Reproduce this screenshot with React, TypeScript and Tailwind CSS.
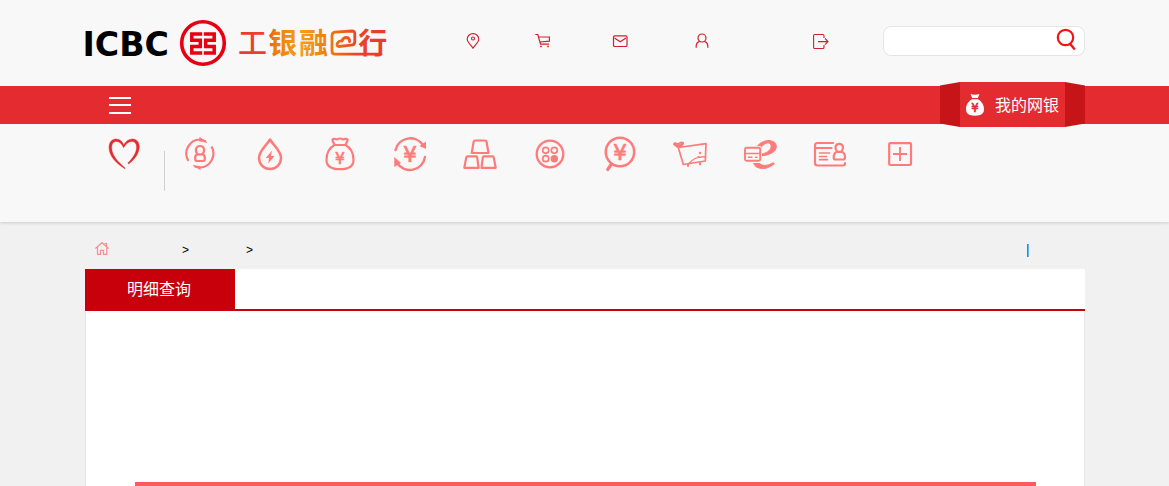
import React from "react";

const cjk = "font-['Open_Sans','Noto_Sans_CJK_SC',sans-serif]";

function Icon({ children }: { children: React.ReactNode }) {
  return (
    <svg
      className="h-9 w-9 shrink-0 overflow-visible text-[#ff7b7b]"
      viewBox="0 0 36 36"
      fill="none"
      stroke="currentColor"
      strokeWidth="2.2"
      strokeLinecap="round"
      strokeLinejoin="round"
    >
      {children}
    </svg>
  );
}

function Yen({ x, y, size }: { x: number; y: number; size: number }) {
  return (
    <text
      x={x}
      y={y}
      fontSize={size}
      fontFamily="DejaVu Sans"
      fontWeight="400"
      textAnchor="middle"
      fill="currentColor"
      stroke="currentColor"
      strokeWidth="0.7"
    >
      ¥
    </text>
  );
}

function Logo() {
  return (
    <svg className="h-[86px] w-[305px] shrink-0 overflow-visible" viewBox="85 0 305 86">
      <defs>
        <linearGradient id="brand" gradientUnits="userSpaceOnUse" x1="239" y1="0" x2="386" y2="0">
          <stop offset="0" stopColor="#ea3a2b" />
          <stop offset="0.18" stopColor="#ea4428" />
          <stop offset="0.24" stopColor="#ee7a08" />
          <stop offset="0.42" stopColor="#f3a01c" />
          <stop offset="0.62" stopColor="#ee7a08" />
          <stop offset="0.8" stopColor="#ea4428" />
          <stop offset="1" stopColor="#ea3a2b" />
        </linearGradient>
      </defs>
      <text x="82.500" y="55.500" fontFamily="DejaVu Sans" fontWeight="700" fontSize="34.500" textLength="86.500" lengthAdjust="spacingAndGlyphs" fill="#000">
        ICBC
      </text>
      <circle cx="203" cy="43" r="21.300" fill="none" stroke="#e60012" strokeWidth="3.600" />
      <g fill="none" stroke="#e60012" strokeWidth="3.500">
        <path d="M202.200 34H191.800V40.200H200.300V46.600H191.800V53H202.200" />
        <path d="M203.800 34H214.200V40.200H205.700V46.600H214.200V53H203.800" />
      </g>
      <g fontFamily="Noto Sans CJK SC" fontWeight="700" fontSize="29" fill="url(#brand)">
        <text x="238" y="54" fontWeight="500">工</text>
        <text x="268.300" y="54">银</text>
        <text x="299" y="54">融</text>
        <text x="358.300" y="54">行</text>
      </g>
      <g fill="none" stroke="url(#brand)" strokeWidth="2.800" strokeLinejoin="round" strokeLinecap="round">
        <path d="M381 54.200H335Q332 54.200 332 51V36Q332 32.500 335 32.200L352 31Q355 31 354.800 34V42Q354.500 45 351 45.200L339 46.500Q336 46 337.500 43Q339 40.500 342 41Q343 37.500 346.500 37.500Q350 38 349.500 41.500" />
      </g>
    </svg>
  );
}

const smallIcon = "h-4 w-4 shrink-0 text-[#d21f2b]";

function Header() {
  return (
    <header className="flex h-[86px] pl-[85px]">
      <Logo />
      <div className="flex h-[86px] items-start pt-[33px] pl-[75px]">
        <svg className={smallIcon} viewBox="0 0 16 16" fill="none" stroke="currentColor" strokeWidth="1.100">
          <path d="M8 15.300C6 12.200 2.200 9 2.200 6.200a5.800 5.600 0 0 1 11.600 0C13.800 9 10 12.200 8 15.300Z" />
          <circle cx="8" cy="5.500" r="1.500" />
        </svg>
        <svg className={`${smallIcon} ml-[54px]`} viewBox="0 0 16 16" fill="none" stroke="currentColor" strokeWidth="1.200">
          <path d="M.3 1.500H2.800L5.500 11.200H14M3.600 4H14.400V8.200L4.800 9" />
          <circle cx="6" cy="13.400" r=".9" fill="currentColor" stroke="none" />
          <circle cx="13" cy="13.400" r=".9" fill="currentColor" stroke="none" />
        </svg>
        <svg className={`${smallIcon} ml-[61px]`} viewBox="0 0 16 16" fill="none" stroke="currentColor" strokeWidth="1.200">
          <rect x="1.500" y="2.800" width="13.500" height="10.700" rx="1.300" />
          <path d="M2.500 5L8.200 8.700L14 5" />
        </svg>
        <svg className={`${smallIcon} ml-[66px]`} viewBox="0 0 16 16" fill="none" stroke="currentColor" strokeWidth="1.200">
          <circle cx="8" cy="5" r="4" />
          <path d="M2.200 14.700V12.500Q2.500 9.300 5.500 8.500M10.500 8.500Q13.500 9.300 13.800 12.500V14.700" />
        </svg>
        <svg className={`${smallIcon} ml-[103px]`} viewBox="0 0 16 16" fill="none" stroke="currentColor" strokeWidth="1.100">
          <path d="M11 5V2.800Q11 1.500 9.700 1.500H1.800Q.6 1.500 .6 2.800V14.300Q.6 15.500 1.800 15.500H9.700Q11 15.500 11 14.300V12M5 8.600H15M12 5.500L15 8.600L12 11.700" />
        </svg>
      </div>
      <div className="mt-[26px] ml-[54px] flex h-[30px] w-[202px] justify-end rounded-lg border border-[#e5e5e5] bg-white pr-[6px]">
        <svg className="h-6 w-[22px]" viewBox="0 0 22 24" fill="none" stroke="#f51414" strokeWidth="2.200">
          <circle cx="9.500" cy="10.500" r="7.700" />
          <path d="M13.800 16.500L18.800 22.500" strokeWidth="2.400" />
        </svg>
      </div>
    </header>
  );
}

function NavBar() {
  return (
    <nav className="relative flex h-[38px] items-center bg-[#e42b30] pl-[109px]">
      <div className="flex flex-col gap-[5.500px]">
        <span className="h-0.5 w-[22px] bg-white" />
        <span className="h-0.5 w-[22px] bg-white" />
        <span className="h-0.5 w-[22px] bg-white" />
      </div>
      <div className="absolute -top-1 left-[940px] flex h-[45px] w-[145px]">
        <svg className="h-[45px] w-5" viewBox="0 0 20 45">
          <path d="M0 3.500L20 0V45L0 41.500Z" fill="#c71418" />
        </svg>
        <div className="flex w-[105px] items-center bg-[#e42b30] pl-[5px]">
          <svg className="h-[22px] w-5 text-[#e42b30]" viewBox="0 0 20 22">
            <path d="M5.500 0Q10 1.500 14.500 0L12.800 4H7.200ZM7 5.300H13C16 7 19 10.500 19 15C19 19.500 16.500 21.700 10 21.700S1 19.500 1 15C1 10.500 4 7 7 5.300Z" fill="white" />
            <Yen x={10} y={17.500} size={11.500} />
          </svg>
          <span className={`${cjk} ml-[10px] text-base leading-6 whitespace-nowrap text-white`}>我的网银</span>
        </div>
        <svg className="h-[45px] w-5" viewBox="0 0 20 45">
          <path d="M0 0L20 3.500V41.500L0 45Z" fill="#c71418" />
        </svg>
      </div>
    </nav>
  );
}

function Shortcuts() {
  return (
    <section className="flex h-[98px] items-start pt-3 pl-[106px]">
      <svg className="h-9 w-9 shrink-0" viewBox="0 0 36 36" fill="#e42b30">
        <path d="M18.800 32.800C10 27 3 20 3 11.500C3 5 7 3 10 3C14 3 17 6 17.600 9C20 5 23 2.800 27 3C31 3.200 33.300 6.500 33.300 11C33 18 28 24 22.500 28L21.800 27C26 23 30.600 17 30.600 11C30.600 7.500 28.800 5.500 26 5.500C22 5.500 19.300 9 17.600 11.800C16 8 13.500 5.500 10.500 5.500C7 5.500 5.700 8 5.700 12C5.700 19 12 26 19.200 32Z" stroke="#e42b30" strokeWidth=".4" />
      </svg>
      <span className="mt-[15px] ml-[22px] h-10 w-px bg-[#d0d0d0]" />
      <div className="ml-[17px] flex gap-[34px]">
        <Icon>
          <path d="M6.500 25A14 14 0 0 1 18 3.500L24 5.200M29.500 10.500A14 14 0 0 1 18 31.500L12.500 30.500" strokeLinecap="butt" />
          <path d="M18 1.500L25 6.500L17.500 5ZM18 33.500L11 29.500L18 30.500Z" strokeWidth=".6" fill="currentColor" />
          <path d="M15.300 18C13 15.500 13.200 10 18 10S23 15.500 20.700 18Q23.200 19.500 22.800 23Q22.800 25 21 25H15Q13.200 25 13.200 23Q12.800 19.500 15.300 18ZM15.300 18.300H20.700" />
        </Icon>
        <Icon>
          <path d="M18 3.500C14.500 9.500 7 14.500 7 22A11 11 0 0 0 29 22C29 14.500 21.500 9.500 18 3.500Z" strokeWidth="2.500" />
          <path d="M20 14.500L13.800 22H17L16.300 27.500L22.500 20H19Z" fill="currentColor" stroke="none" />
        </Icon>
        <Icon>
          <path d="M12.500 9L10.500 4.500Q10.200 2.500 12.500 2.800L15 3.500Q18 1.500 21 3.500L23.500 2.800Q26 2.500 25.500 4.500L23.500 9ZM12.500 9C7 12 4.500 17 4.500 24C4.500 30 8 33.200 18 33.200S31.500 30 31.500 24C31.500 17 29 12 23.500 9" />
          <Yen x={18} y={27.500} size={15.500} />
        </Icon>
        <Icon>
          <path d="M3.500 14A15.300 15.300 0 0 1 31 9M33 21A15.300 15.300 0 0 1 5 27" strokeWidth="2.400" />
          <path d="M34 5.500V13L27.500 10ZM2.300 21V31L9 27Z" fill="currentColor" stroke="none" />
          <g strokeWidth="1">
            <Yen x={18} y={26} size={22} />
          </g>
        </Icon>
        <Icon>
          <path d="M13 4.500H23.200Q24.300 4.500 24.500 5.500L26.500 17H9.700L11.700 5.500Q12 4.500 13 4.500ZM5.500 20.300H14Q15 20.300 15.200 21.300L16.600 31.800H2.300L4.300 21.300Q4.600 20.300 5.500 20.300ZM22 20.300H30.500Q31.500 20.300 31.700 21.300L33.700 31.800H19.500L20.800 21.300Q21 20.300 22 20.300Z" />
        </Icon>
        <Icon>
          <circle cx="18" cy="18" r="13.300" strokeWidth="2.300" />
          <circle cx="13.700" cy="14.300" r="3" strokeWidth="1.700" />
          <circle cx="22.300" cy="14.300" r="3" strokeWidth="1.700" />
          <circle cx="13.700" cy="22.700" r="3" strokeWidth="1.700" />
          <circle cx="22.300" cy="22.700" r="3.700" fill="currentColor" stroke="none" />
        </Icon>
        <Icon>
          <circle cx="18" cy="16" r="14.200" strokeWidth="2.500" />
          <path d="M9.500 28L5.700 33.500" strokeWidth="3.200" />
          <Yen x={18} y={24} size={22} />
        </Icon>
        <Icon>
          <g strokeWidth="1.700">
            <path d="M6.300 11.500L34 7.700L33.300 25L11.300 28.500ZM6.300 11.500L2 8.500Q2.500 6.500 6.300 8Q9 5.500 11.300 7Q10.500 9.500 6.300 11.500" />
            <path d="M2.500 7.500L6.300 10L10.500 7.500" strokeWidth="2.200" />
            <path d="M17 27.500Q23 20 33 21M26 20.500Q28.500 22.200 30.500 20.500" strokeWidth="1.300" />
            <path d="M16 28.500V30M28 27V28.500" strokeWidth="2" />
            <circle cx="28" cy="17" r="1.200" fill="currentColor" stroke="none" />
          </g>
        </Icon>
        <Icon>
          <text x="9" y="31.500" fontSize="60" fontFamily="Liberation Serif" fontStyle="italic" fontWeight="400" fill="currentColor" stroke="currentColor" strokeWidth=".9">e</text>
          <rect x="1" y="10" width="19" height="17" rx="3" fill="#f8f8f8" stroke="none" />
          <rect x="3" y="11.800" width="15.200" height="13" rx="1.500" strokeWidth="1.900" />
          <path d="M3 17.500H18" strokeWidth="1.500" />
          <path d="M6.500 21.300H10M13.500 21.300H15" strokeWidth="1.500" />
        </Icon>
        <Icon>
          <path d="M21 7H5.500Q3 7 3 9.500V27Q3 29.500 5.500 29.500H31Q33 29.500 33 27M4 12H19.500" />
          <path d="M7.500 17H17.500M7.500 20.500H14.500M7.500 23.700H15.500" strokeWidth="1.700" />
          <path d="M25 15.500C22.500 12.500 23 7.800 27.200 7.800S32 12.500 29.500 15.500Q33 17 33 21.500Q33 23.500 31 23.500H23.500Q21.700 23.500 21.700 21.500Q21.700 17 25 15.500ZM25 15.800H29.500" />
        </Icon>
        <Icon>
          <rect x="7.200" y="7.200" width="21.800" height="21.800" rx="1" />
          <path d="M18 11V25M11 18H25" strokeWidth="1.900" strokeLinecap="butt" />
        </Icon>
      </div>
    </section>
  );
}

export default function App() {
  return (
    <div className="h-[486px] w-[1169px] overflow-hidden bg-[#f1f1f1]">
      <div className="h-[222px] bg-[#f8f8f8] shadow-[0_1px_3px_rgba(0,0,0,0.16)]">
        <Header />
        <NavBar />
        <Shortcuts />
      </div>
      <main className="ml-[85px] w-[1000px]">
        <div className="flex h-[47px] items-start font-['Liberation_Sans'] text-[12px] leading-[14px] text-black">
          <svg className="mt-[19.500px] ml-[10px] h-[13px] w-[14px]" viewBox="0 0 14 13" fill="none" stroke="#f78f8f" strokeWidth="1.200">
            <path d="M.4 6.500L7 .7L13.600 6.500M2.500 5V12.400H5.500V8.300H8.500V12.400H11.800V5M9.500 1.500H11.500V4.200" />
          </svg>
          <span className="mt-[21px] ml-[73px] w-16">&gt;</span>
          <span className="mt-[21px] w-16">&gt;</span>
          <span className="mt-[22px] ml-[717px] h-[13px] w-0.5 border-l border-[#a86d20] bg-[#5bb5f5]" />
        </div>
        <div className="flex h-[42px] border-b-2 border-[#c7000b] bg-white">
          <div className={`${cjk} flex w-[150px] items-center justify-center bg-[#c7000b] pr-0.5 text-base leading-6 text-white`}>明细查询</div>
        </div>
        <div className="h-[175px] border-x border-[#e6e6e6] bg-white pt-[171px] pl-[49px]">
          <div className="h-1 w-[901px] bg-[#ff5b5f]" />
        </div>
      </main>
    </div>
  );
}
